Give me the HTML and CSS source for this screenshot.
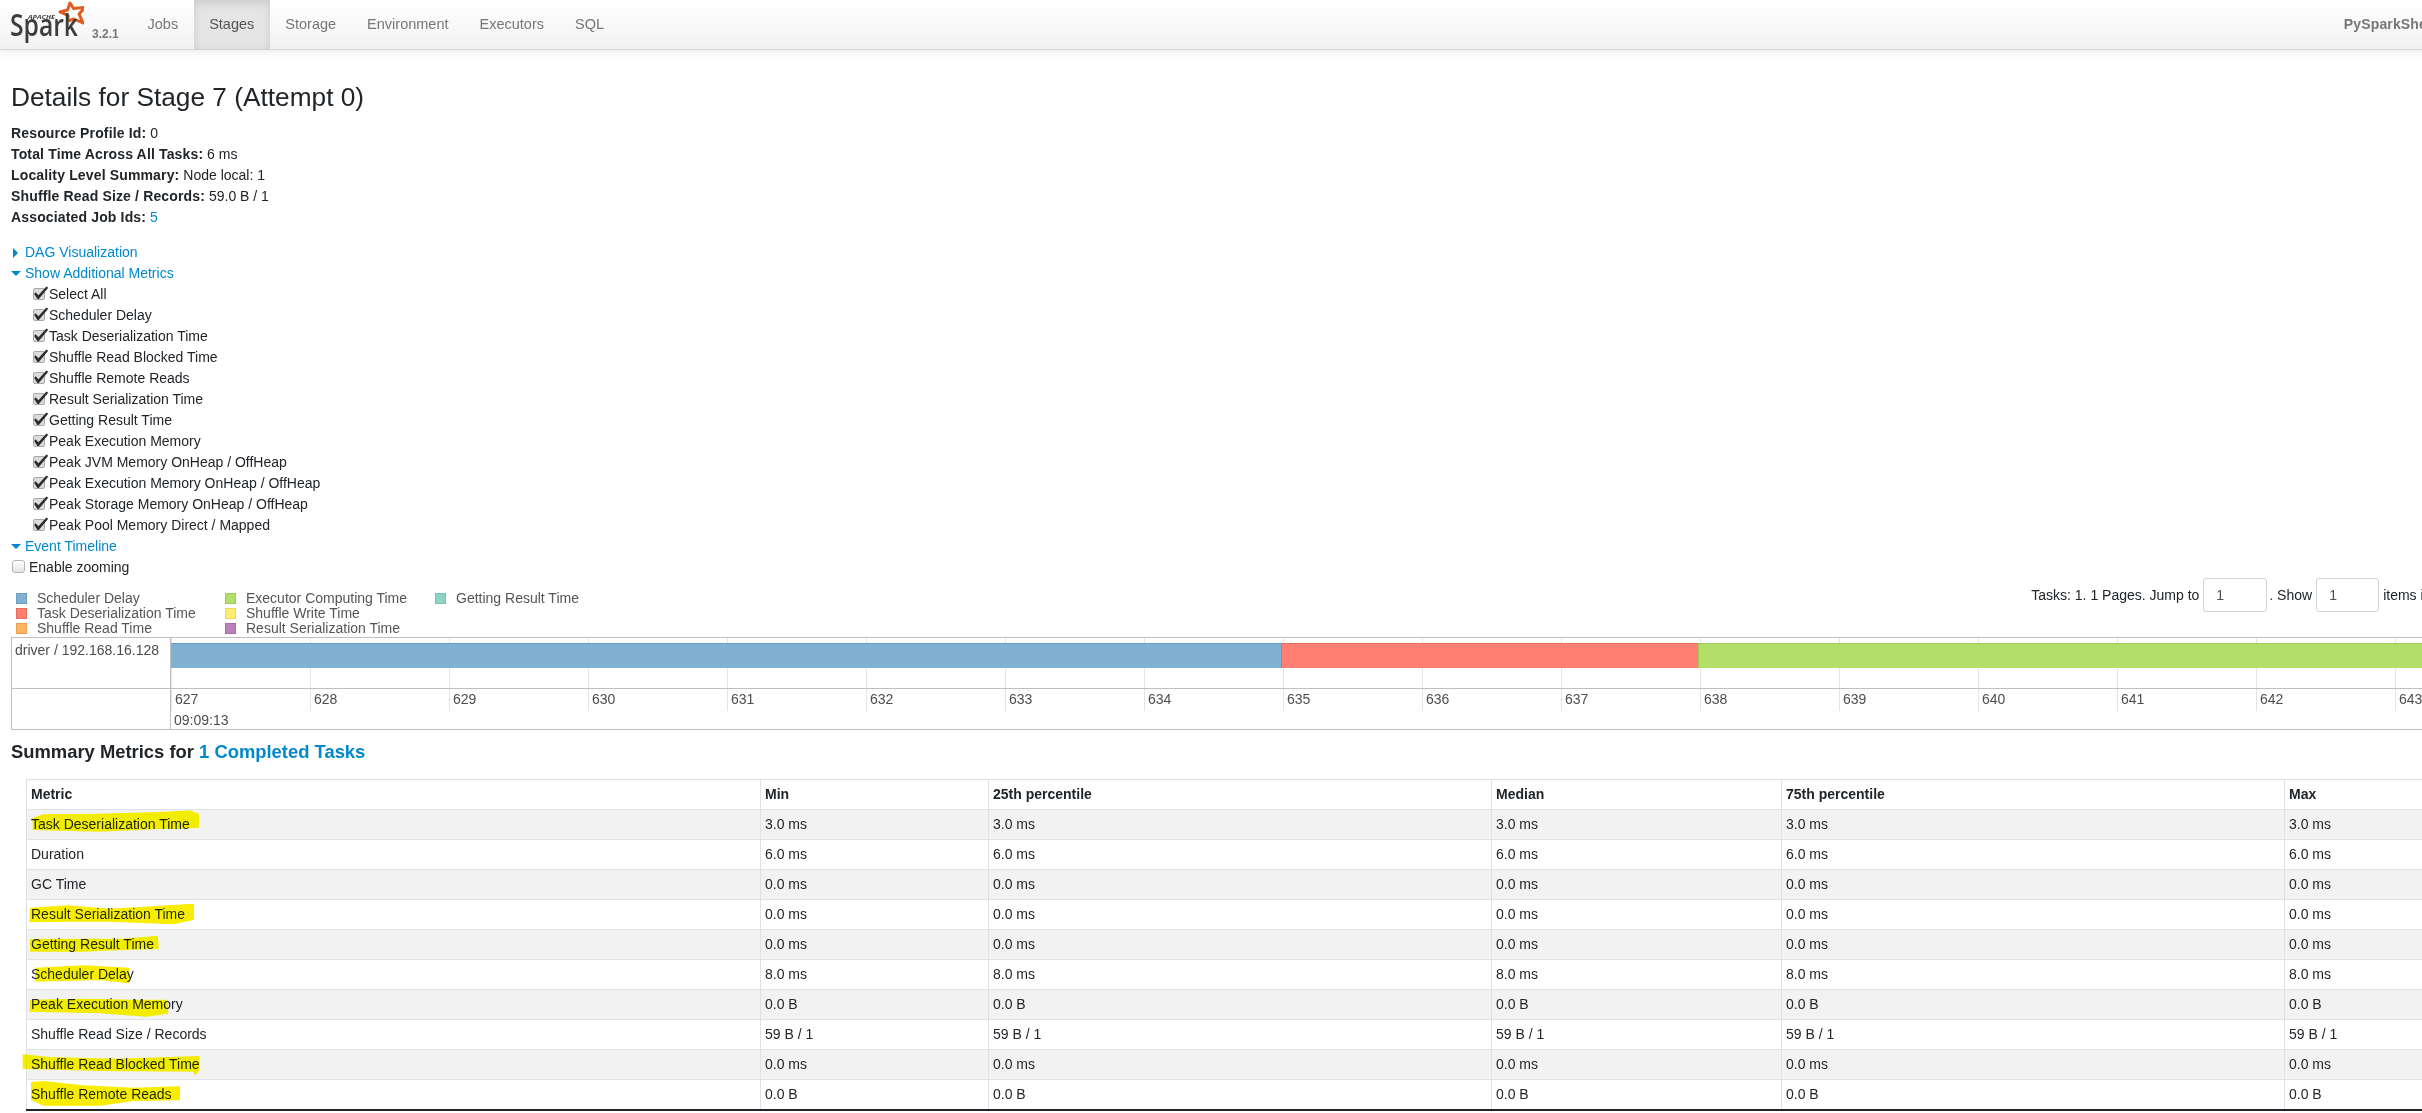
FILE: index.html
```html
<!DOCTYPE html>
<html lang="en">
<head>
<meta charset="UTF-8">
<meta name="viewport" content="width=device-width, initial-scale=1.0">
<title>PySparkShell - Details for Stage 7 (Attempt 0)</title>
<link rel="stylesheet" href="styles.css">
</head>
<body>

<svg class="defs" width="0" height="0">
    <symbol id="checked" viewBox="0 0 16 14">
        <rect x="0.5" y="2.5" width="11" height="11" rx="1.5" fill="#dcdcdc" stroke="#a9a9a9"/>
        <path d="M2.6 6.2 L5.4 9.2 L13.4 0.4 L15.2 1.8 L5.8 13 L4.4 13 L1.2 8 Z" fill="#2b2b2b"/>
    </symbol>
</svg>

<div class="page">

<nav class="navbar">
    <a class="brand" href="#">
        <svg class="logo" width="84" height="49" viewBox="0 0 84 49">
            <polygon points="70,3 73.5,8.5 85,7.5 79,14 83,23 74,19 68,21 68,15.5 60,12 67.5,10" fill="#fff" stroke="#e25a1c" stroke-width="3" stroke-linejoin="round"/>
            <text x="28" y="19" class="logo-apache" textLength="27" lengthAdjust="spacingAndGlyphs">APACHE</text>
            <text x="10" y="36" class="logo-spark" textLength="68" lengthAdjust="spacingAndGlyphs">Spark</text>
        </svg>
        <span class="version">3.2.1</span>
    </a>
    <ul class="nav-tabs">
        <li><a href="#">Jobs</a></li>
        <li class="active"><a href="#">Stages</a></li>
        <li><a href="#">Storage</a></li>
        <li><a href="#">Environment</a></li>
        <li><a href="#">Executors</a></li>
        <li><a href="#">SQL</a></li>
    </ul>
    <span class="app-name">PySparkShell application UI</span>
</nav>

<div class="content">
    <h3>Details for Stage 7 (Attempt 0)</h3>

    <ul class="stage-info">
        <li><strong>Resource Profile Id:</strong> 0</li>
        <li><strong>Total Time Across All Tasks:</strong> 6 ms</li>
        <li><strong>Locality Level Summary:</strong> Node local: 1</li>
        <li><strong>Shuffle Read Size / Records:</strong> 59.0 B / 1</li>
        <li><strong>Associated Job Ids:</strong> <a href="#">5</a></li>
    </ul>

    <div class="toggle"><span class="arrow-right"></span><a href="#">DAG Visualization</a></div>
    <div class="toggle"><span class="arrow-down"></span><a href="#">Show Additional Metrics</a></div>
    <ul class="metric-list">
        <li><svg class="check"><use href="#checked"/></svg>Select All</li>
        <li><svg class="check"><use href="#checked"/></svg>Scheduler Delay</li>
        <li><svg class="check"><use href="#checked"/></svg>Task Deserialization Time</li>
        <li><svg class="check"><use href="#checked"/></svg>Shuffle Read Blocked Time</li>
        <li><svg class="check"><use href="#checked"/></svg>Shuffle Remote Reads</li>
        <li><svg class="check"><use href="#checked"/></svg>Result Serialization Time</li>
        <li><svg class="check"><use href="#checked"/></svg>Getting Result Time</li>
        <li><svg class="check"><use href="#checked"/></svg>Peak Execution Memory</li>
        <li><svg class="check"><use href="#checked"/></svg>Peak JVM Memory OnHeap / OffHeap</li>
        <li><svg class="check"><use href="#checked"/></svg>Peak Execution Memory OnHeap / OffHeap</li>
        <li><svg class="check"><use href="#checked"/></svg>Peak Storage Memory OnHeap / OffHeap</li>
        <li><svg class="check"><use href="#checked"/></svg>Peak Pool Memory Direct / Mapped</li>
    </ul>
    <div class="toggle"><span class="arrow-down"></span><a href="#">Event Timeline</a></div>
    <label class="zoom-option"><input type="checkbox" class="zoom-box">Enable zooming</label>

    <div class="legend-row">
        <div class="legend">
            <div class="legend-item"><span class="swatch scheduler"></span>Scheduler Delay</div>
            <div class="legend-item"><span class="swatch deser"></span>Task Deserialization Time</div>
            <div class="legend-item"><span class="swatch shuffle-read"></span>Shuffle Read Time</div>
            <div class="legend-item"><span class="swatch computing"></span>Executor Computing Time</div>
            <div class="legend-item"><span class="swatch shuffle-write"></span>Shuffle Write Time</div>
            <div class="legend-item"><span class="swatch result-ser"></span>Result Serialization Time</div>
            <div class="legend-item"><span class="swatch getting"></span>Getting Result Time</div>
        </div>
        <form class="task-nav">
            <span>Tasks: 1. 1 Pages. Jump to</span>
            <input type="text" class="page-input" value="1">
            <span class="show-label">. Show</span>
            <input type="text" class="page-input size-input" value="1">
            <span>items in a page.</span>
            <button type="button" class="go-button">Go</button>
        </form>
    </div>

    <div class="timeline">
        <div class="tl-labels">
            <div class="tl-group">driver / 192.168.16.128</div>
            <div class="tl-axis-label"></div>
        </div>
        <div class="tl-main">
            <div class="tl-track">
                <div class="tl-ticks">
                    <span></span><span></span><span></span><span></span><span></span><span></span><span></span><span></span><span></span><span></span><span></span><span></span><span></span><span></span><span></span><span></span><span></span>
                </div>
                <div class="tl-bar">
                    <div class="seg-scheduler"></div>
                    <div class="seg-deser"></div>
                    <div class="seg-computing"></div>
                </div>
            </div>
            <div class="tl-axis">
                <span>627</span><span>628</span><span>629</span><span>630</span><span>631</span><span>632</span><span>633</span><span>634</span><span>635</span><span>636</span><span>637</span><span>638</span><span>639</span><span>640</span><span>641</span><span>642</span><span>643</span>
            </div>
            <div class="tl-date">09:09:13</div>
        </div>
    </div>

    <h4>Summary Metrics for <a href="#">1 Completed Tasks</a></h4>

    <div class="summary">
        <table>
            <colgroup>
                <col class="col-metric"><col class="col-min"><col class="col-p25"><col class="col-median"><col class="col-p75"><col class="col-max">
            </colgroup>
            <thead>
                <tr><th>Metric</th><th>Min</th><th>25th percentile</th><th>Median</th><th>75th percentile</th><th>Max</th></tr>
            </thead>
            <tbody>
                <tr><td>Task Deserialization Time</td><td>3.0 ms</td><td>3.0 ms</td><td>3.0 ms</td><td>3.0 ms</td><td>3.0 ms</td></tr>
                <tr><td>Duration</td><td>6.0 ms</td><td>6.0 ms</td><td>6.0 ms</td><td>6.0 ms</td><td>6.0 ms</td></tr>
                <tr><td>GC Time</td><td>0.0 ms</td><td>0.0 ms</td><td>0.0 ms</td><td>0.0 ms</td><td>0.0 ms</td></tr>
                <tr><td>Result Serialization Time</td><td>0.0 ms</td><td>0.0 ms</td><td>0.0 ms</td><td>0.0 ms</td><td>0.0 ms</td></tr>
                <tr><td>Getting Result Time</td><td>0.0 ms</td><td>0.0 ms</td><td>0.0 ms</td><td>0.0 ms</td><td>0.0 ms</td></tr>
                <tr><td>Scheduler Delay</td><td>8.0 ms</td><td>8.0 ms</td><td>8.0 ms</td><td>8.0 ms</td><td>8.0 ms</td></tr>
                <tr><td>Peak Execution Memory</td><td>0.0 B</td><td>0.0 B</td><td>0.0 B</td><td>0.0 B</td><td>0.0 B</td></tr>
                <tr><td>Shuffle Read Size / Records</td><td>59 B / 1</td><td>59 B / 1</td><td>59 B / 1</td><td>59 B / 1</td><td>59 B / 1</td></tr>
                <tr><td>Shuffle Read Blocked Time</td><td>0.0 ms</td><td>0.0 ms</td><td>0.0 ms</td><td>0.0 ms</td><td>0.0 ms</td></tr>
                <tr><td>Shuffle Remote Reads</td><td>0.0 B</td><td>0.0 B</td><td>0.0 B</td><td>0.0 B</td><td>0.0 B</td></tr>
            </tbody>
        </table>
        <!-- marker strokes someone drew over the table -->
        <svg class="marker" width="500" height="383" viewBox="0 0 1500 1149">
            <path d="M100 262 L130 252 L300 250 L480 245 L570 240 L595 250 L595 288 L540 292 L480 292 L300 300 L100 295 Z"/>
            <path d="M92 532 L200 525 L330 535 L460 528 L580 520 L580 565 L520 578 L330 570 L200 570 L90 572 Z"/>
            <path d="M92 626 L250 625 L370 625 L472 616 L474 652 L370 655 L250 660 L92 660 Z"/>
            <path d="M108 712 L250 705 L385 712 L390 745 L385 755 L300 745 L108 750 Z"/>
            <path d="M92 808 L250 805 L400 808 L500 808 L503 846 L440 855 L300 845 L90 840 Z"/>
            <path d="M70 972 L150 980 L350 985 L597 977 L597 1015 L587 1030 L580 1020 L300 1018 L70 1012 Z"/>
            <path d="M95 1055 L130 1052 L250 1065 L400 1072 L538 1068 L538 1106 L400 1108 L300 1122 L130 1122 L95 1105 Z"/>
        </svg>
    </div>
</div>

</div>

</body>
</html>
```

FILE: styles.css
```css
html, body {
    margin: 0;
    overflow: hidden;
    background-color: #fff;
}
body {
    font-family: "Liberation Sans", Arial, sans-serif;
    font-size: 14px;
    line-height: 21px;
    color: #212529;
}
a {
    color: #0088cc;
    text-decoration: none;
}
ul {
    list-style: none;
    margin: 0;
    padding: 0;
}
strong {
    letter-spacing: .15px;
}
.defs {
    position: absolute;
}
.page {
    width: 2560px;
}

/* top bar */
.navbar {
    display: flex;
    align-items: stretch;
    height: 49px;
    padding-right: 27px;
    background: linear-gradient(to bottom, #ffffff, #f2f2f2);
    border-bottom: 1px solid #d4d4d4;
    box-shadow: 0 1px 10px rgba(0, 0, 0, .1);
}
.brand {
    display: flex;
    width: 132px;
    flex-shrink: 0;
}
.logo-apache {
    font-family: "Open Sans", sans-serif;
    font-size: 6px;
    font-weight: 700;
    font-style: italic;
    fill: #444;
}
.logo-spark {
    font-family: "Open Sans", sans-serif;
    font-size: 30px;
    font-weight: 600;
    fill: #3d3d3d;
}
.version {
    margin: 24px 0 0 8px;
    font-size: 12px;
    font-weight: bold;
    color: #777;
}
.nav-tabs {
    display: flex;
    font-size: 14.5px;
}
.nav-tabs a {
    display: block;
    padding: 14px 15.5px;
    color: #777;
}
.nav-tabs .active a {
    height: 21px;
    color: #555;
    background-color: #e5e5e5;
    box-shadow: inset 0 3px 8px rgba(0, 0, 0, .125);
}
.app-name {
    margin-left: auto;
    align-self: center;
    font-weight: bold;
    letter-spacing: .15px;
    color: #777;
}

/* stage details */
.content {
    padding: 0 11px;
}
h3 {
    margin: 0;
    padding-top: 32px;
    font-size: 26.25px;
    line-height: 30px;
    font-weight: 400;
}
.stage-info {
    margin-top: 11px;
}
.stage-info li {
    height: 21px;
}
.toggle {
    display: flex;
    align-items: center;
    height: 21px;
}
.stage-info + .toggle {
    margin-top: 14px;
}
.arrow-right {
    width: 0;
    height: 0;
    margin: 0 7px 0 2px;
    border-top: 5px solid transparent;
    border-bottom: 5px solid transparent;
    border-left: 5px solid #0088cc;
}
.arrow-down {
    width: 0;
    height: 0;
    margin-right: 4px;
    border-left: 5px solid transparent;
    border-right: 5px solid transparent;
    border-top: 5px solid #0088cc;
}
.metric-list {
    padding-left: 22px;
}
.metric-list li {
    display: flex;
    align-items: center;
    height: 21px;
}
.check {
    width: 16px;
    height: 14px;
    margin-bottom: 3px;
}
.zoom-option {
    display: flex;
    align-items: center;
    height: 21px;
}
.zoom-box {
    appearance: none;
    width: 13px;
    height: 13px;
    margin: 0 4px 2px 1px;
    border: 1px solid #b5b5b5;
    border-radius: 3px;
    background: linear-gradient(to bottom, #ffffff, #e4e4e4);
}

/* legend + pagination */
.legend-row {
    display: flex;
    align-items: flex-start;
    height: 57px;
    margin-top: 2px;
}
.legend {
    display: grid;
    grid-auto-flow: column;
    grid-template-rows: repeat(3, 15px);
    grid-template-columns: 209px 210px auto;
    margin: 11px 0 0 5px;
    color: #555;
}
.legend-item {
    display: flex;
    align-items: center;
    line-height: 15px;
}
.swatch {
    width: 9px;
    height: 9px;
    margin-right: 10px;
    border: 1px solid;
}
.scheduler { background-color: #80b1d3; border-color: #6c9dbf; }
.deser { background-color: #fb8072; border-color: #e76c5e; }
.shuffle-read { background-color: #fdb462; border-color: #e9a04e; }
.computing { background-color: #b3de69; border-color: #9fca55; }
.shuffle-write { background-color: #ffed6f; border-color: #ebd95b; }
.result-ser { background-color: #bc80bd; border-color: #a86ca9; }
.getting { background-color: #8dd3c7; border-color: #79bfb3; }

.task-nav {
    display: flex;
    align-items: center;
    gap: 4px;
    margin-left: auto;
    height: 34px;
    margin-top: -2px;
}
.show-label {
    margin-left: -2px;
}
.page-input {
    box-sizing: border-box;
    width: 64px;
    height: 34px;
    padding: 0 12px;
    font: inherit;
    color: #495057;
    border: 1px solid #ced4da;
    border-radius: 3px;
}
.size-input {
    width: 63px;
}
.go-button {
    box-sizing: border-box;
    width: 63px;
    height: 34px;
    font: inherit;
    color: #fff;
    background-color: #0088cc;
    border: 1px solid #0088cc;
    border-radius: 3px;
}

/* timeline */
.timeline {
    display: flex;
    box-sizing: border-box;
    height: 93px;
    border-top: 1px solid #bfbfbf;
    border-bottom: 1px solid #bfbfbf;
    border-left: 1px solid #bfbfbf;
    color: #4d4d4d;
}
.tl-labels {
    flex: 0 0 158px;
    border-right: 1px solid #bfbfbf;
}
.tl-group {
    box-sizing: border-box;
    height: 51px;
    padding: 2px 0 0 3px;
    border-bottom: 1px solid #bfbfbf;
    white-space: nowrap;
}
.tl-main {
    flex: 1;
}
.tl-track {
    position: relative;
    box-sizing: border-box;
    height: 51px;
    border-bottom: 1px solid #bfbfbf;
}
.tl-ticks {
    display: flex;
    height: 100%;
}
.tl-ticks span {
    flex: 0 0 139px;
    box-sizing: border-box;
    border-left: 1px solid #e5e5e5;
}
.tl-bar {
    position: absolute;
    top: 5px;
    left: 0;
    right: 0;
    display: flex;
    height: 25px;
}
.seg-scheduler {
    box-sizing: border-box;
    flex: 0 0 1110px;
    background-color: #80b1d3;
    border-top: 1px solid #6c9dbf;
}
.seg-deser {
    box-sizing: border-box;
    flex: 0 0 417px;
    background-color: #ff8072;
    border-top: 1px solid #e76c5e;
    border-left: 1px solid #e76c5e;
}
.seg-computing {
    box-sizing: border-box;
    flex: 1;
    background-color: #b3de69;
    border-top: 1px solid #9fca55;
    border-left: 1px solid #9fca55;
}
.tl-axis {
    display: flex;
    height: 22px;
}
.tl-axis span {
    flex: 0 0 139px;
    box-sizing: border-box;
    padding-left: 3px;
    border-left: 1px solid #e5e5e5;
}
.tl-date {
    padding-left: 3px;
    line-height: 18px;
}

/* summary table */
h4 {
    margin: 0;
    padding-top: 11px;
    font-size: 18.4px;
    line-height: 21px;
}
.summary {
    position: relative;
    margin: 17px 0 0 15px;
}
table {
    width: 2500px;
    table-layout: fixed;
    border-collapse: collapse;
    border-bottom: 2px solid #212529;
}
.col-metric { width: 734px; }
.col-min { width: 228px; }
.col-p25 { width: 503px; }
.col-median { width: 290px; }
.col-p75 { width: 503px; }
th, td {
    padding: 4px;
    text-align: left;
    border: 1px solid #dee2e6;
}
tbody tr:nth-child(odd) {
    background-color: #f2f2f2;
}
.marker {
    position: absolute;
    top: -48px;
    left: -26px;
    pointer-events: none;
    mix-blend-mode: darken;
}
.marker path {
    fill: #f8ec00;
    stroke: #f8ec00;
    stroke-width: 4;
    stroke-linejoin: round;
}
```
